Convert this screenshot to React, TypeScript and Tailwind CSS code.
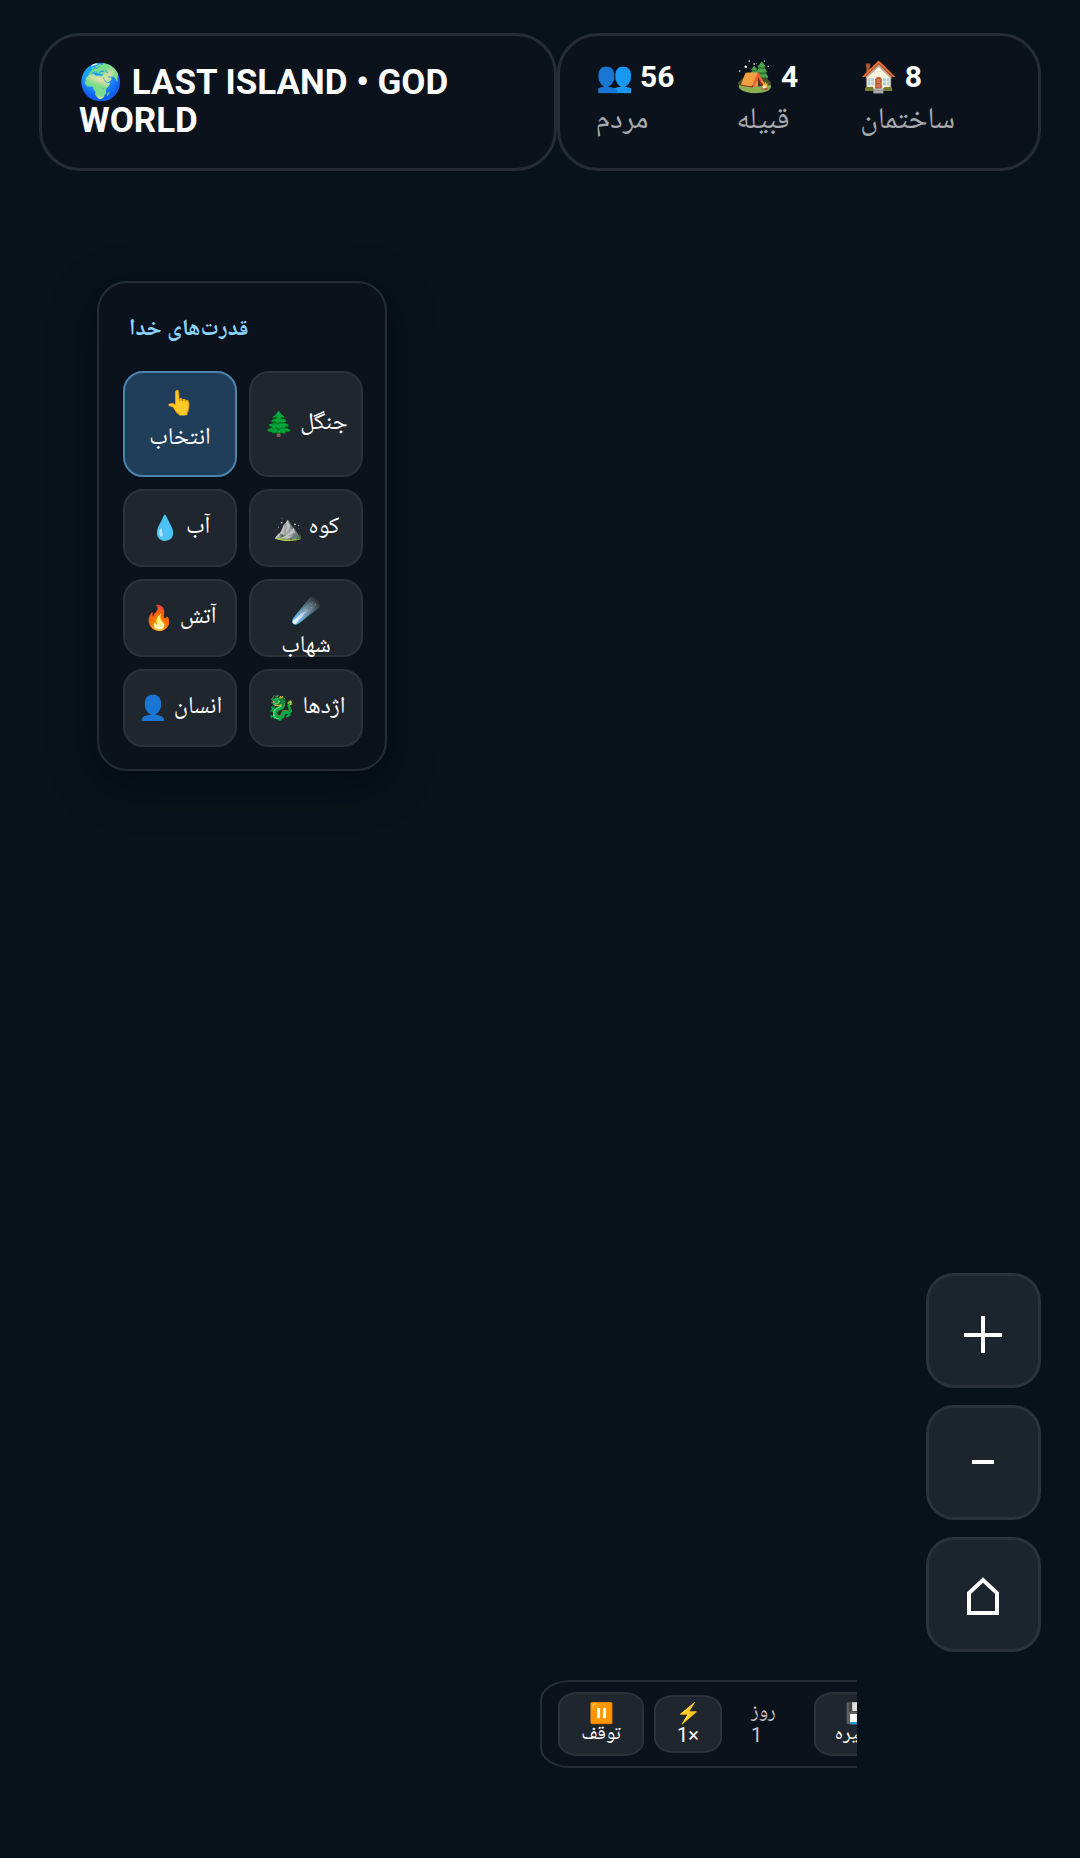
type Stat = { icon: string; value: number; label: string };
type Power = { icon: string; label: string; active?: boolean; stacked?: boolean };

const stats: Stat[] = [
  { icon: "👥", value: 56, label: "مردم" },
  { icon: "🏕️", value: 4, label: "قبیله" },
  { icon: "🏠", value: 8, label: "ساختمان" },
];

const powers: Power[] = [
  { icon: "👆", label: "انتخاب", active: true, stacked: true },
  { icon: "🌲", label: "جنگل" },
  { icon: "💧", label: "آب" },
  { icon: "⛰️", label: "کوه" },
  { icon: "🔥", label: "آتش" },
  { icon: "☄️", label: "شهاب", stacked: true },
  { icon: "👤", label: "انسان" },
  { icon: "🐉", label: "اژدها" },
];

function PowerButton({ icon, label, active, stacked }: Power) {
  return (
    <button
      type="button"
      className={`flex rounded-[20px] border-2 text-2xl leading-9 text-white ${
        active ? "border-[#4c84ad] bg-[#203e5a]" : "border-[#2b323a] bg-[#1f262d]"
      } ${stacked ? "flex-col items-center pt-3" : "items-center justify-center gap-1.5"}`}
    >
      <span>{icon}</span>
      <span>{label}</span>
    </button>
  );
}

export default function App() {
  return (
    <div className="flex min-h-screen flex-col bg-[#07121a] px-[39px] pt-[33px] pb-[90px] font-[Roboto,'Noto_Naskh_Arabic_UI','Noto_Naskh_Arabic','DejaVu_Sans',sans-serif] text-white">
      {/* Top bar */}
      <header className="flex h-[138px] items-stretch">
        <h1 className="flex-[520] rounded-[41px] border-3 border-[#252c34] bg-[#0b121b] px-[37px] pt-7 text-[35px] leading-[38px] font-bold">
          🌍 LAST ISLAND • GOD WORLD
        </h1>
        <div className="flex flex-[483] gap-[62px] rounded-[41px] border-3 border-[#252c34] bg-[#0b121b] px-9 pt-5">
          {stats.map((stat) => (
            <div key={stat.label}>
              <div className="text-[30px] leading-[42px] font-bold whitespace-nowrap">
                {stat.icon} {stat.value}
              </div>
              <div className="text-[30px] leading-[48px] text-[#a6aaae]">{stat.label}</div>
            </div>
          ))}
        </div>
      </header>

      {/* God powers */}
      <section className="mt-[110px] ml-[58px] w-[290px] rounded-[30px] border-2 border-[#252c34] bg-[#0b121b] pt-[30px] pr-[22px] pb-[22px] pl-6 shadow-[0_12px_48px_rgba(0,0,0,0.35)]">
        <h2 className="mb-[22px] px-1.5 text-[23px] leading-9 font-bold text-[#8bd3ff]">قدرت‌های خدا</h2>
        <div className="grid grid-cols-2 grid-rows-[106px_78px_78px_78px] gap-3">
          {powers.map((power) => (
            <PowerButton key={power.label} {...power} />
          ))}
        </div>
      </section>

      {/* Zoom controls */}
      <div className="mt-auto flex flex-col gap-[17px] self-end">
        <button type="button" aria-label="بزرگ‌نمایی" className="flex size-[115px] items-center justify-center rounded-[28px] border-3 border-[#2a333b] bg-[#1c252d]">
          <svg viewBox="0 0 40 44" className="h-11 w-10" fill="none" stroke="currentColor" strokeWidth="4" aria-hidden="true">
            <path d="M19 7v38M0 26h38" />
          </svg>
        </button>
        <button type="button" aria-label="کوچک‌نمایی" className="flex size-[115px] items-center justify-center rounded-[28px] border-3 border-[#2a333b] bg-[#1c252d]">
          <svg viewBox="0 0 40 40" className="size-10" fill="none" stroke="currentColor" strokeWidth="4" aria-hidden="true">
            <path d="M8 19h22" />
          </svg>
        </button>
        <button type="button" aria-label="خانه" className="flex size-[115px] items-center justify-center rounded-[28px] border-3 border-[#2a333b] bg-[#1c252d]">
          <svg viewBox="0 0 40 44" className="h-11 w-10" fill="none" stroke="currentColor" strokeWidth="4" aria-hidden="true">
            <path d="M5 40V20L19 7l14 13v20z" />
          </svg>
        </button>
      </div>

      {/* Time controls */}
      <div className="mt-7 mr-[184px] ml-[50%] overflow-hidden">
        <div className="flex h-[88px] w-[420px] items-center rounded-[30px/20px] border-2 border-[#252c34] bg-[#0b121b] pl-4 text-xl leading-[22px]">
          <button type="button" className="flex h-16 w-[86px] flex-col items-center justify-center rounded-[20px/14px] border-2 border-[#2b323a] bg-[#1f262d]">
            <span>⏸️</span>
            <span>توقف</span>
          </button>
          <button type="button" className="ml-2.5 flex h-[58px] w-[68px] flex-col items-center justify-center rounded-[20px/14px] border-2 border-[#2b323a] bg-[#1f262d]">
            <span>⚡️</span>
            <span>1×</span>
          </button>
          <div className="ml-[29px] w-[63px] text-[#c4c7ca]">
            <div>روز</div>
            <div>1</div>
          </div>
          <button type="button" className="flex h-16 w-[86px] flex-col items-center justify-center rounded-[20px/14px] border-2 border-[#2b323a] bg-[#1f262d]">
            <span>💾</span>
            <span>ذخیره</span>
          </button>
        </div>
      </div>
    </div>
  );
}
